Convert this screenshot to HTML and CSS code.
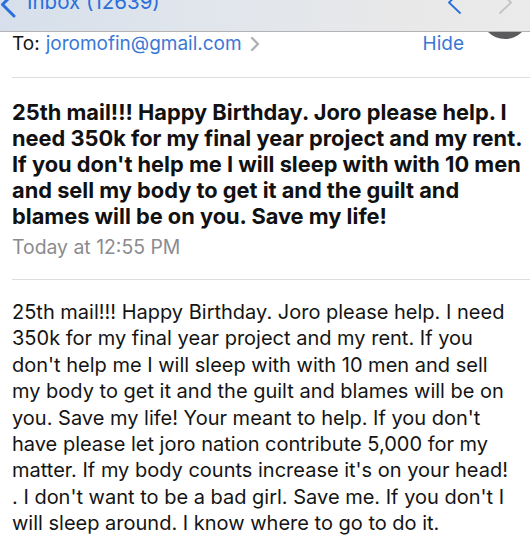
FILE: index.html
```html
<!DOCTYPE html>
<html lang="en">
<head>
<meta charset="utf-8">
<title>Mail</title>
<link rel="stylesheet" href="styles.css">
</head>
<body>
<div class="screen">
  <header class="nav">
    <div class="nav-left">
      <svg class="nav-back" width="17" height="28" viewBox="0 0 17 28"><polyline points="14,3 2.5,14.5 14,26" /></svg>
      <span class="nav-title">Inbox (12639)</span>
    </div>
    <div class="nav-right">
      <svg class="nav-arrow nav-arrow-up" width="16" height="24" viewBox="0 0 16 24"><polyline points="14,2 3,12.5 14,23" /></svg>
      <svg class="nav-arrow nav-arrow-down" width="16" height="24" viewBox="0 0 16 24"><polyline points="2,2 13,12.5 2,23" /></svg>
    </div>
  </header>
  <div class="avatar"></div>

  <section class="meta">
    <div class="to-row">
      <span class="to-label">To:</span>
      <span class="to-addr">joromofin@gmail.com</span>
      <svg class="disclosure" width="10" height="16" viewBox="0 0 10 16"><polyline points="2,2 8,8 2,14" /></svg>
      <span class="hide">Hide</span>
    </div>
  </section>

  <section class="subject-block">
    <h1 class="subject">25th mail!!! Happy Birthday. Joro please help. I<br>need 350k for my final year project and my rent.<br>If you don't help me I will sleep with with 10 men<br>and sell my body to get it and the guilt and<br>blames will be on you. Save my life!</h1>
    <div class="date">Today at 12:55 PM</div>
  </section>

  <section class="message">
    <p class="message-text">25th mail!!! Happy Birthday. Joro please help. I need<br>350k for my final year project and my rent. If you<br>don't help me I will sleep with with 10 men and sell<br>my body to get it and the guilt and blames will be on<br>you. Save my life! Your meant to help. If you don't<br>have please let joro nation contribute 5,000 for my<br>matter. If my body counts increase it's on your head!<br>. I don't want to be a bad girl. Save me. If you don't I<br>will sleep around. I know where to go to do it.</p>
  </section>
</div>
</body>
</html>
```

FILE: styles.css
```css
html, body {
  margin: 0;
  padding: 0;
  background: #ffffff;
}

body {
  font-family: "Inter", "Liberation Sans", sans-serif;
  color: #141414;
}

.screen {
  position: relative;
  width: 530px;
  height: 545px;
  overflow: hidden;
  background: #ffffff;
}

/* top navigation bar (cut off at top) */
.nav {
  position: relative;
  z-index: 2;
  height: 31px;
  border-bottom: 1px solid #b3b3b5;
  background: linear-gradient(90deg, #d6dfeb 0%, #e1e6ec 40%, #e8e8e9 75%, #ebebeb 100%);
  display: flex;
  justify-content: space-between;
  align-items: flex-start;
}

.nav-left {
  display: flex;
  align-items: flex-start;
  margin-top: -10px;
  color: #2b6fdc;
}

.nav-back {
  display: block;
  fill: none;
  stroke: #2b6fdc;
  stroke-width: 3;
  stroke-linecap: round;
  stroke-linejoin: round;
}

.nav-title {
  margin-left: 10px;
  font-size: 20.5px;
  line-height: 24px;
}

.nav-right {
  display: flex;
  align-items: flex-start;
  gap: 36px;
  margin-top: -10px;
  padding-right: 16px;
}

.nav-arrow {
  display: block;
  fill: none;
  stroke-width: 1.8;
  stroke-linecap: round;
  stroke-linejoin: round;
}

.nav-arrow-up { stroke: #2b6fdc; }
.nav-arrow-down { stroke: #c4c4c6; }

.avatar {
  position: absolute;
  z-index: 1;
  left: 481px;
  top: -9px;
  width: 48px;
  height: 48px;
  border-radius: 50%;
  background: #5b5b5e;
}

/* To: row */
.meta {
  margin-left: 12px;
  padding-bottom: 21px;
  border-bottom: 1px solid #dddddf;
}

.to-row {
  display: flex;
  align-items: center;
  height: 24px;
  font-size: 19px;
  line-height: 24px;
}

.to-label {
  color: #141414;
}

.to-addr {
  margin-left: 6px;
  color: #3a78d6;
}

.disclosure {
  display: block;
  margin-left: 8px;
  fill: none;
  stroke: #b2b2b6;
  stroke-width: 2.4;
  stroke-linecap: round;
  stroke-linejoin: round;
}

.hide {
  margin-left: auto;
  margin-right: 66px;
  color: #3a78d6;
}

/* subject */
.subject-block {
  margin-left: 12px;
  padding-top: 21px;
  padding-bottom: 20px;
  border-bottom: 1px solid #dddddf;
}

.subject {
  margin: 0;
  font-size: 21.8px;
  font-weight: 700;
  line-height: 26px;
  white-space: nowrap;
  color: #111111;
}

.date {
  margin-top: 6px;
  font-size: 19.4px;
  line-height: 24px;
  color: #8b8b90;
}

/* body */
.message {
  margin-left: 12px;
  padding-top: 19px;
}

.message-text {
  margin: 0;
  font-size: 20px;
  line-height: 26.4px;
  white-space: nowrap;
  color: #141414;
}
```
